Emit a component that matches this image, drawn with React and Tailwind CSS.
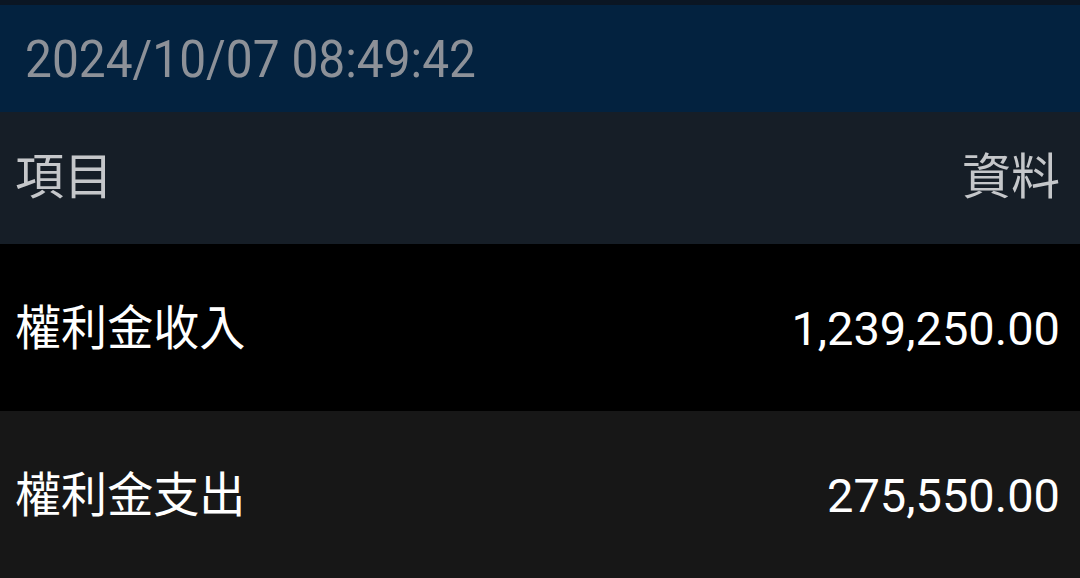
export default function App() {
  return (
    <div className="w-[1080px] h-[578px] overflow-hidden flex flex-col bg-[#171717] font-['Roboto','Noto_Sans_CJK_TC','Noto_Sans_CJK_SC',sans-serif]">
      <div className="h-[5px] bg-[#0b1623]" />
      <div className="h-[108px] bg-[#03223f] flex items-center px-[25px] pt-[2px]">
        <span className="text-[52px] text-[#8d9198] inline-block origin-left scale-x-[0.92] whitespace-nowrap">
          2024/10/07 08:49:42
        </span>
      </div>
      <div className="h-[132px] bg-[#161e27] flex items-center justify-between pl-[15px] pr-[20px] text-[49px] text-[#c5c7ca]">
        <span>項目</span>
        <span>資料</span>
      </div>
      <div className="h-[168px] bg-black flex items-center justify-between pl-[15px] pr-[20px] pt-[4px] text-white">
        <span className="text-[48px] inline-block origin-left scale-x-[0.96]">權利金收入</span>
        <span className="text-[47px]">1,239,250.00</span>
      </div>
      <div className="h-[168px] bg-[#171717] flex items-center justify-between pl-[15px] pr-[20px] pt-[4px] text-white">
        <span className="text-[48px] inline-block origin-left scale-x-[0.96]">權利金支出</span>
        <span className="text-[47px]">275,550.00</span>
      </div>
    </div>
  );
}
